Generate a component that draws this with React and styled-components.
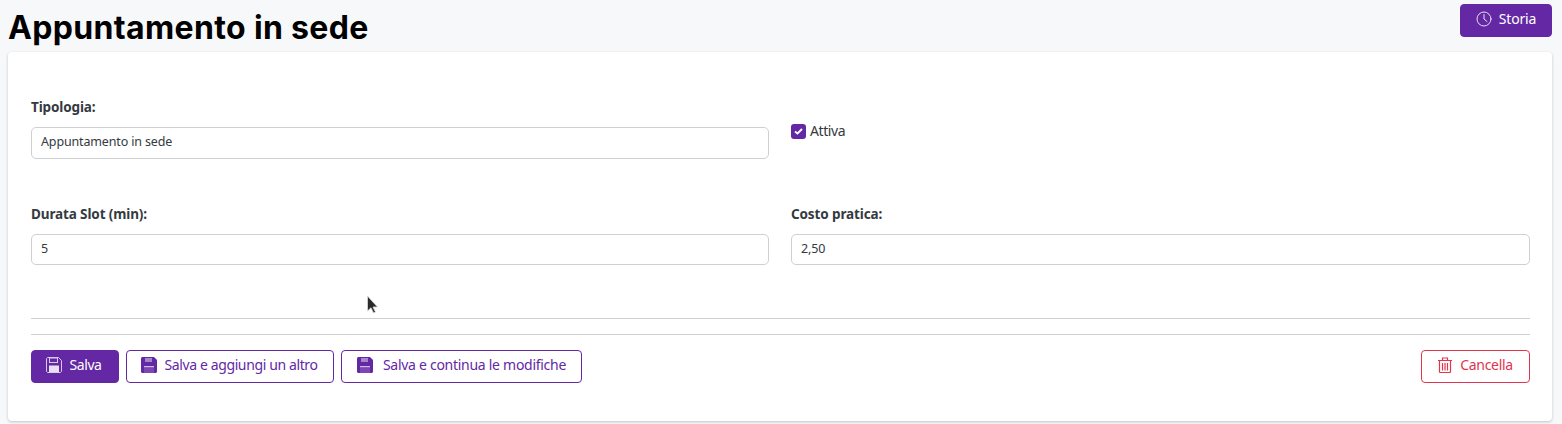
import React from 'react';
import styled, { createGlobalStyle } from 'styled-components';

const Global = createGlobalStyle`
  html, body { margin: 0; padding: 0; background: #f7f8fa; }
  body { font-family: "Noto Sans", "Open Sans", sans-serif; color: #343a40; }
  * { box-sizing: border-box; }
`;
const purple = '#6428a4';
const Page = styled.div`position: relative; width: 1562px; height: 424px; overflow: hidden;`;
const Header = styled.header`display: flex; justify-content: space-between; align-items: flex-start; height: 52px; padding: 4px 10px 0 8px;`;
const Title = styled.h1`margin: 4px 0 0; font: 700 32px/40px Inter, sans-serif; color: #000; letter-spacing: 0.35px;`;
const Card = styled.main`margin: 0 10px 0 8px; height: 369px; background: #fff; border-radius: 4px; box-shadow: 0 1px 3px rgba(0,0,0,.22); padding: 46px 22px 0 23px;`;
const FormGrid = styled.div`display: grid; grid-template-columns: 738px 739px; column-gap: 22px;`;
const Field = styled.div`height: ${p => p.$h}px;`;
const Label = styled.label`display: block; font: 700 13.5px/18px "Noto Sans", sans-serif; letter-spacing: -0.12px; color: #343a40; margin-bottom: ${p => p.$gap}px;`;
const Input = styled.div`height: ${p => p.$h}px; border: 1px solid #ced0d3; border-radius: 5px; padding: 0 9px ${p => p.$h === 32 ? 1 : 0}px; display: flex; align-items: center; font: 400 12.5px/1 "Noto Sans", sans-serif; letter-spacing: -0.15px; color: #343a40; background: #fff;`;
const CheckRow = styled.div`display: flex; align-items: flex-start; gap: 4px; padding-top: 23px; font: 400 14px/20px "Noto Sans", sans-serif; letter-spacing: -0.4px; color: #343a40;`;
const CheckBox = styled.span`width: 15px; height: 15px; margin-top: 3px; border-radius: 3px; background: ${purple}; display: inline-flex; align-items: center; justify-content: center;`;
const Rule = styled.hr`margin: 0 0 15px; border: 0; border-top: 1px solid #cfcfcf;`;
const Rules = styled.div``;
const Actions = styled.div`display: flex; gap: 7px; align-items: center;`;
const Spacer = styled.div`flex: 1;`;
const Button = styled.button`
  display: inline-flex; align-items: center; justify-content: center; gap: ${p => p.$gap ?? 7}px;
  height: 33px; width: ${p => p.$w}px; padding: 0 ${p => p.$pr ?? 0}px 3px 0; border-radius: 4px;
  font: 400 14px/1 "Noto Sans", sans-serif; letter-spacing: ${p => p.$track ?? -0.42}px;
  border: 1px solid ${p => p.$color};
  background: ${p => p.$solid ? p.$color : '#fff'};
  color: ${p => p.$solid ? '#fff' : p.$color};
  svg { flex: none; }
`;
const Cursor = styled.svg`position: absolute; left: 366px; top: 295px;`;

const Save = ({ outline }) => (
  <svg width="16" height="16" viewBox="0 0 16 16" fill="none">
    {outline ? <>
      <path d="M.5 2C.5 1.200 1.200.5 2 .5h10.500l3 3V14c0 .8-.7 1.500-1.500 1.500H2C1.200 15.500.5 14.800.5 14Z" stroke="#d9c9ec" />
      <rect x="3.500" y="1" width="8" height="4.500" stroke="#d9c9ec" />
      <rect x="3" y="8.500" width="10" height="6.500" fill="#fff" opacity=".85" />
    </> : <>
      <path d="M0 1.500C0 .7.700 0 1.500 0H13l3 3v11.500c0 .8-.7 1.500-1.500 1.500h-13C.7 16 0 15.300 0 14.500Z" fill="#6428a4" />
      <rect x="4" y="1" width="7" height="4" fill="#a585cc" />
      <rect x="3" y="9" width="10" height="7" fill="#7a47b3" />
      <rect x="3" y="9" width="10" height="1.200" fill="#cdb9e6" />
    </>}
  </svg>
);
const Clock = () => (
  <svg width="16" height="16" viewBox="0 0 16 16" fill="none" stroke="currentColor" strokeWidth="1" strokeLinecap="round" style={{ opacity: .85 }}>
    <circle cx="8" cy="8" r="7" /><path d="M8 3.500V8l3 2.500" />
  </svg>
);
const Trash = () => (
  <svg width="14" height="16" viewBox="0 0 14 16" fill="none" stroke="currentColor" strokeWidth="1.200">
    <path d="M0 3.500h14M4.500 3.500V1h5v2.500M1.500 3.500v11c0 .5.300 1 1 1h9c.7 0 1-.5 1-1v-11M4.500 6v7.500M7 6v7.500M9.500 6v7.500" />
  </svg>
);

export default function App() {
  return (
    <Page>
      <Global />
      <Header>
        <Title>Appuntamento in sede</Title>
        <Button $solid $color={purple} $w={92} $gap={7} $track={-0.2}><Clock />Storia</Button>
      </Header>
      <Card>
        <FormGrid>
          <Field $h={107}>
            <Label $gap={11}>Tipologia:</Label>
            <Input $h={32}>Appuntamento in sede</Input>
          </Field>
          <CheckRow>
            <CheckBox>
              <svg width="9" height="7" viewBox="0 0 9 7" fill="none" stroke="#fff" strokeWidth="1.800"><path d="M1 3.500l2.500 2L8 1" /></svg>
            </CheckBox>
            Attiva
          </CheckRow>
          <Field $h={113}>
            <Label $gap={11}>Durata Slot (min):</Label>
            <Input $h={31}>5</Input>
          </Field>
          <Field $h={113}>
            <Label $gap={11}>Costo pratica:</Label>
            <Input $h={31}>2,50</Input>
          </Field>
        </FormGrid>
        <Rules>
          <Rule />
          <Rule />
        </Rules>
        <Actions>
          <Button $solid $color={purple} $w={88} $pr={2}><Save outline />Salva</Button>
          <Button $color={purple} $w={208} $track={-0.38} $pr={1}><Save />Salva e aggiungi un altro</Button>
          <Button $color={purple} $w={241} $gap={10} $track={-0.28}><Save />Salva e continua le modifiche</Button>
          <Spacer />
          <Button $color="#e3344f" $w={109} $gap={8} $track={-0.3}><Trash />Cancella</Button>
        </Actions>
      </Card>
      <Cursor width="13" height="20" viewBox="0 0 13 20">
        <path d="M1.500 1v15l3.500-3.200 2.500 5.200 2-1-2.500-5h4.500z" fill="#2b2b2b" stroke="#ddd" strokeWidth=".8" />
      </Cursor>
    </Page>
  );
}
